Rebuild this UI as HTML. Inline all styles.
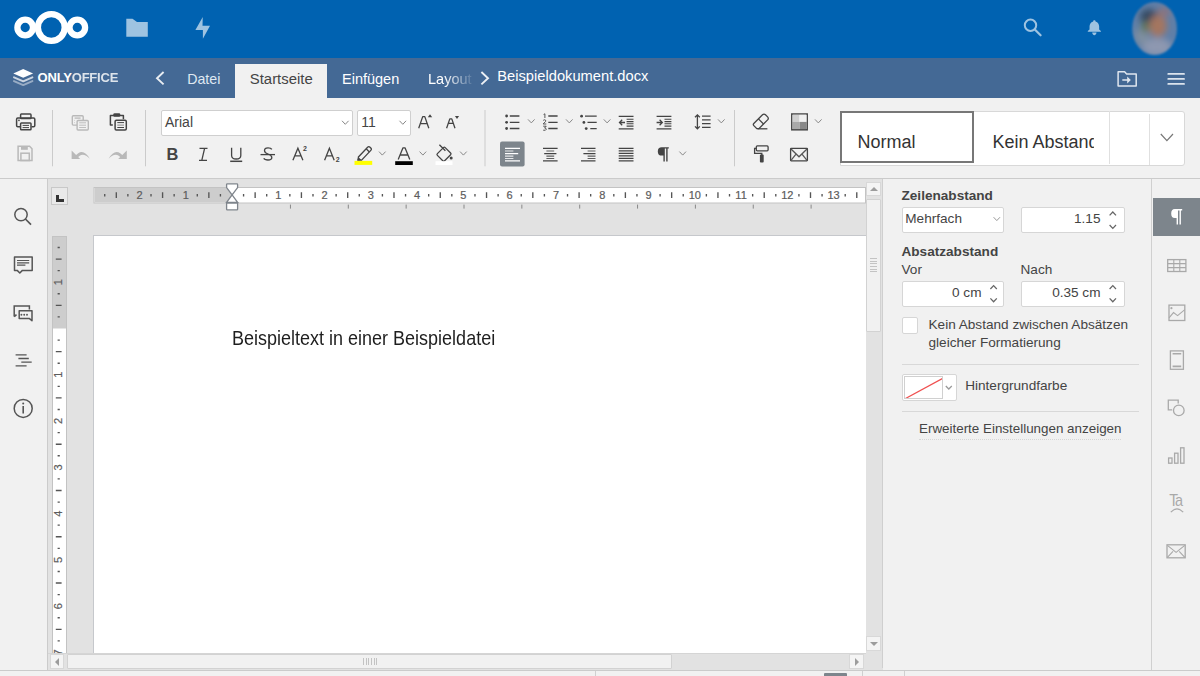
<!DOCTYPE html>
<html><head><meta charset="utf-8">
<style>
*{box-sizing:border-box;margin:0;padding:0}
html,body{width:1200px;height:676px;overflow:hidden;background:#f1f1f1;font-family:"Liberation Sans",sans-serif;}
.a{position:absolute}
#top{left:0;top:0;width:1200px;height:58px;background:#0062b1}
#hdr{left:0;top:58px;width:1200px;height:40px;background:#446995}
#tb{left:0;top:98px;width:1200px;height:81px;background:#f1f1f1;border-bottom:1px solid #cbcbcb}
#ls{left:0;top:179px;width:48px;height:491px;background:#f1f1f1;border-right:1px solid #cbcbcb}
#work{left:48px;top:179px;width:835px;height:491px;background:#e2e2e2}
#page{left:93px;top:235px;width:773px;height:418px;background:#fff;border-left:1px solid #c6c8cc;border-top:1px solid #c6c8cc}
#rp{left:883px;top:179px;width:269px;height:491px;background:#f1f1f1}
#ri{left:1151px;top:179px;width:49px;height:491px;background:#f1f1f1;border-left:1px solid #d0d0d0}
.tab{top:12px;font-size:14.5px;line-height:18px;white-space:nowrap}
.combo{height:25.5px;background:#fff;border:1px solid #cfcfcf;border-radius:2px}
.combo span{position:absolute;top:3px;font-size:14px;color:#444;line-height:16px}
.gal{top:34px;font-size:18px;color:#333;line-height:20px;white-space:nowrap}
.sbb{width:14.5px;height:14.5px;background:#f4f4f4;border:1px solid #d8d8d8}
.sbb svg{position:absolute;left:-0.5px;top:-0.5px}
.lbl{font-size:13.6px;color:#444;line-height:16px;white-space:nowrap}
.fld{height:26.5px;background:#fff;border:1px solid #d6d6d6;border-radius:2px}
.fld span{position:absolute;top:3.5px;font-size:13.6px;color:#444;line-height:16px;white-space:nowrap}
#sb{left:0;top:670px;width:1200px;height:6px;background:#f1f1f1;border-top:1px solid #cbcbcb}
</style></head><body>
<div id="top" class="a">
<svg class="a" style="left:0;top:0" width="240" height="58" viewBox="0 0 240 58">
<g fill="none" stroke="#fff">
<circle cx="25.2" cy="27.5" r="7.8" stroke-width="6.3"/>
<circle cx="77.3" cy="27.5" r="7.8" stroke-width="6.3"/>
<circle cx="51.3" cy="27.5" r="13.4" stroke-width="6.3"/>
</g>
<path d="M126.3,18.7 L132.5,18.7 L137,22 L147.8,22 L147.8,36.8 L126.3,36.8 Z" fill="#9ec3e1"/>
<path d="M202.75,17 L195.4,29.9 L202.9,29.9 L202.9,38.7 L210,25.75 L202.5,25.75 Z" fill="#9ec3e1"/>
</svg>
<svg class="a" style="left:1000px;top:0" width="200" height="58" viewBox="1000 0 200 58">
<circle cx="1030.5" cy="25.2" r="5.7" fill="none" stroke="#9ec3e1" stroke-width="2"/>
<path d="M1034.8,29.5 L1040.6,35.3" stroke="#9ec3e1" stroke-width="2.2" stroke-linecap="round"/>
<path d="M1094.35,20.3 c0.8,0 1.2,0.5 1.2,1.1 c2.5,0.6 3.6,2.8 3.6,5.2 l0,3 l1.75,1.3 l0,0.9 l-13.1,0 l0,-0.9 l1.75,-1.3 l0,-3 c0,-2.4 1.1,-4.6 3.6,-5.2 c0,-0.6 0.4,-1.1 1.2,-1.1 z M1092.2,32.6 l4.3,0 c0,1.4 -1,2.6 -2.15,2.6 c-1.15,0 -2.15,-1.2 -2.15,-2.6 z" fill="#9ec3e1"/>
<defs><filter id="bl" x="-50%" y="-50%" width="200%" height="200%"><feGaussianBlur stdDeviation="3.2"/></filter>
<filter id="bl2" x="-50%" y="-50%" width="200%" height="200%"><feGaussianBlur stdDeviation="1.2"/></filter>
<clipPath id="avc"><ellipse cx="1154.6" cy="28.5" rx="22.4" ry="26.5"/></clipPath></defs>
<g filter="url(#bl2)"><g clip-path="url(#avc)">
<rect x="1130" y="0" width="50" height="58" fill="#5f7fa8"/>
<g filter="url(#bl)">
<ellipse cx="1157" cy="47" rx="15" ry="9" fill="#8e98b0"/>
<ellipse cx="1142" cy="36" rx="7" ry="9" fill="#7f8fa0"/>
<ellipse cx="1149" cy="17" rx="9" ry="8" fill="#344a60"/>
<ellipse cx="1158" cy="26" rx="9" ry="11" fill="#a47660"/>
<ellipse cx="1145" cy="27" rx="4" ry="6" fill="#5e7458"/>
<ellipse cx="1164" cy="12" rx="7" ry="5" fill="#8a7480"/>
</g></g></g>
</svg>
</div>
<div id="hdr" class="a">
<svg class="a" style="left:0;top:0" width="40" height="40" viewBox="0 58 40 40">
<path d="M13.3,73.4 L23.2,69 L33.1,73.4 L23.2,77.7 Z" fill="#fff"/>
<path d="M14,77.3 L23.2,81.3 L32.4,77.3" fill="none" stroke="#fff" stroke-width="2" stroke-linejoin="round" stroke-linecap="round" opacity="0.72"/>
<path d="M14,81.1 L23.2,85.1 L32.4,81.1" fill="none" stroke="#fff" stroke-width="2" stroke-linejoin="round" stroke-linecap="round" opacity="0.45"/>
</svg>
<div class="a" style="left:37.6px;top:12.2px;font-size:13px;font-weight:bold;color:#fff;letter-spacing:-0.2px;line-height:15px">ONLY<span style="opacity:.82">OFFICE</span></div>
<svg class="a" style="left:150px;top:10px" width="20" height="20" viewBox="150 68 20 20"><path d="M163.6,72 L157,78.2 L163.6,84.4" fill="none" stroke="#fff" stroke-width="1.9" opacity="0.88"/></svg>
<div class="a tab" style="left:187.2px;color:#dfe8f2;font-size:14.2px">Datei</div>
<div class="a" style="left:235px;top:6px;width:92px;height:34px;background:#f1f1f1"></div>
<div class="a tab" style="left:249.8px;color:#444;font-size:14.9px">Startseite</div>
<div class="a tab" style="left:342px;color:#fff">Einfügen</div>
<div class="a tab" style="left:428px;color:#fff;width:44px;overflow:hidden;-webkit-mask-image:linear-gradient(90deg,#000 35%,rgba(0,0,0,.55) 70%,rgba(0,0,0,.12) 100%)">Layout</div>
<svg class="a" style="left:476px;top:10px" width="20" height="20" viewBox="476 68 20 20"><path d="M481.4,72 L488,78.2 L481.4,84.4" fill="none" stroke="#fff" stroke-width="1.9" opacity="0.9"/></svg>
<div class="a" style="left:497.3px;top:9px;font-size:14.7px;color:#fff;line-height:18px;white-space:nowrap">Beispieldokument.docx</div>
<svg class="a" style="left:1110px;top:0" width="90" height="40" viewBox="1110 58 90 40">
<path d="M1118.1,71.7 L1124.6,71.7 L1126.6,73.9 L1136.2,73.9 L1136.2,86.1 L1118.1,86.1 Z" fill="none" stroke="#dfe6ef" stroke-width="1.5" stroke-linejoin="round"/>
<path d="M1122.3,80 L1128.6,80" stroke="#dfe6ef" stroke-width="1.5"/><path d="M1127.2,76.6 L1130.8,80 L1127.2,83.4 Z" fill="#dfe6ef"/>
<path d="M1168.3,73.9 L1184,73.9 M1168.3,78.9 L1184,78.9 M1168.3,83.9 L1184,83.9" stroke="#dbe3ed" stroke-width="1.9" stroke-linecap="round"/>
</svg>
</div>
<div id="tb" class="a">
<div class="a combo" style="left:161px;top:12px;width:192px"><span style="left:3px">Arial</span></div>
<div class="a combo" style="left:356.5px;top:12px;width:54px"><span style="left:3.8px">11</span></div>
<div class="a" style="left:840px;top:12.5px;width:345px;height:55.5px;background:#fff;border:1px solid #d8d8d8;border-radius:0 3px 3px 0"></div>
<div class="a" style="left:1109px;top:12.5px;width:1px;height:53px;background:#e0e0e0"></div>
<div class="a" style="left:1149px;top:16px;width:1px;height:51px;background:#e0e0e0"></div>
<div class="a" style="left:840px;top:12.5px;width:134px;height:52.5px;border:2px solid #777"></div>
<div class="a gal" style="left:857.5px">Normal</div>
<div class="a gal" style="left:974px;width:120px;overflow:hidden;padding-left:18.5px">Kein Abstand</div>
<svg class="a" style="left:0;top:0" width="1200" height="81" viewBox="0 98 1200 81"><path d="M52.5,110 L52.5,166.3" stroke="#cbcbcb" stroke-width="1"/>
<path d="M145.5,110 L145.5,166.3" stroke="#cbcbcb" stroke-width="1"/>
<path d="M485,110 L485,166.3" stroke="#cbcbcb" stroke-width="1"/>
<path d="M734.5,110 L734.5,166.3" stroke="#cbcbcb" stroke-width="1"/>
<g fill="none" stroke="#444" stroke-width="1.5">
<rect x="20.6" y="114.1" width="10.4" height="4.5" rx="0.8"/>
<path d="M20,126.8 L17.8,126.8 Q16.6,126.8 16.6,125.6 L16.6,119.2 Q16.6,117.9 17.8,117.9 L33.6,117.9 Q34.8,117.9 34.8,119.2 L34.8,125.6 Q34.8,126.8 33.6,126.8 L31.6,126.8"/>
<rect x="20.6" y="122.9" width="10.4" height="6.9" rx="0.8" fill="#f1f1f1"/>
<path d="M22.6,125.4 L29,125.4 M22.6,127.6 L29,127.6" stroke-width="1"/>
</g><rect x="18.2" y="119.6" width="1.5" height="1.5" fill="#444"/>
<g fill="none" stroke="#b9b9b9" stroke-width="1.5">
<path d="M18.1,146.3 L29.6,146.3 L32,148.7 L32,160.5 L18.1,160.5 Z"/>
<rect x="20.9" y="153.2" width="8.4" height="7.3"/>
</g><rect x="21" y="146" width="6.8" height="3.8" fill="#b9b9b9"/>
<g stroke="#b9b9b9" stroke-width="1.4" fill="#f1f1f1">
<rect x="72.3" y="115.7" width="10.9" height="9.4" rx="1"/>
<path d="M74.6,118.1 L80.6,118.1" stroke-width="1.3"/>
<path d="M74.3,120.4 L74.9,120.4 M74.3,122.6 L74.9,122.6" stroke-width="0.9"/>
<rect x="77.1" y="120.5" width="11.2" height="9.5" rx="1"/>
<path d="M79.2,122.8 L86,122.8 M79.2,125.2 L86,125.2 M79.2,127.5 L86,127.5" stroke-width="0.9"/>
</g>
<g stroke="#444" stroke-width="1.5" fill="none">
<path d="M112.8,125 L110.4,125 L110.4,115.5 L123.4,115.5 L123.4,119.3" stroke-linejoin="round"/>
<rect x="113.3" y="113.3" width="7" height="3.4" rx="1.3" fill="#444" stroke="none"/>
<rect x="115.1" y="120.3" width="11.2" height="9.6" rx="1.2" fill="#f1f1f1"/>
<path d="M117.3,122.6 L124,122.6 M117.3,127.5 L124,127.5" stroke-width="1"/>
<path d="M117.3,125.1 L124,125.1" stroke-width="1" stroke="#888"/>
</g>
<path d="M71.6,150.4 L71.6,159 L80.2,159 Z" fill="#b9b9b9"/>
<path d="M74.6,156.8 Q82.6,146.4 89.8,158.8 Q82.4,150.8 76.8,158.6 Z" fill="#b9b9b9"/>
<path d="M126.8,150.4 L126.8,159 L118.2,159 Z" fill="#b9b9b9"/>
<path d="M123.8,156.8 Q115.8,146.4 108.6,158.8 Q116,150.8 121.6,158.6 Z" fill="#b9b9b9"/>
<g fill="none" stroke="#444" stroke-width="1.3">
<path d="M418.7,128.2 L422.7,116.6 L424.8,116.6 L428.8,128.2 M420.3,123.6 L427.2,123.6" stroke-linejoin="round"/>
<path d="M446.6,128.2 L449.8,118.9 L451.8,118.9 L455,128.2 M447.9,123.3 L453.7,123.3" stroke-linejoin="round"/>
</g>
<path d="M427.8,117.2 L432.2,117.2 L430,114.2 Z" fill="#444"/>
<path d="M454.9,116 L459.1,116 L457,118.9 Z" fill="#444"/>
<text x="166.6" y="159.8" font-family="Liberation Sans" font-weight="bold" font-size="16.4" fill="#444">B</text>
<g fill="none" stroke="#444" stroke-width="1.3">
<path d="M199.5,148.3 L207.5,148.3 M199,160.3 L207,160.3 M204.6,148.3 L201.8,160.3"/>
<path d="M231.6,147.8 L231.6,155.5 Q231.6,159 236.2,159 Q240.8,159 240.8,155.5 L240.8,147.8"/>
<path d="M230.2,161.3 L242.2,161.3" stroke-width="1.5"/>
<path d="M260.5,154.6 L275,154.6"/>
<path d="M271.8,149.4 Q271,147.8 268,147.8 Q264.5,147.8 264.5,150.6 Q264.5,153 268,154 Q271.8,155.2 271.8,157.5 Q271.8,160 268,160 Q264.6,160 263.8,158.3"/>
</g>
<g fill="none" stroke="#444" stroke-width="1.3">
<path d="M292.9,160.2 L297.9,148.2 L302.9,160.2 M294.7,155.8 L301.1,155.8"/>
<path d="M324.6,160.2 L329.4,148.2 L334.2,160.2 M326.4,155.8 L332.4,155.8"/>
</g>
<text x="303.1" y="150.8" font-family="Liberation Sans" font-weight="bold" font-size="7" fill="#444">2</text>
<text x="335.8" y="161.6" font-family="Liberation Sans" font-weight="bold" font-size="7" fill="#444">2</text>
<g fill="none" stroke="#444" stroke-width="1.3">
<path d="M358.4,157 L367.6,147.2 Q368.8,146 370,147.2 L370.8,148 Q372,149.2 370.8,150.4 L361.6,160.2 L358.2,160.2 Z"/>
<path d="M366.2,148.8 L369.4,152"/>
<path d="M398.2,159.6 L403,147.8 L405,147.8 L409.8,159.6 M400.2,155 L407.8,155" stroke-linejoin="round"/>
<path d="M439.4,144.8 L445.4,150.8 M437.4,153.6 L443.4,147.6 Q444.3,146.7 445.2,147.6 L450.6,153 Q451.5,153.9 450.6,154.8 L444.6,160.8 Q443.7,161.7 442.8,160.8 L437.4,155.4 Q436.5,154.5 437.4,153.6 Z"/>
</g>
<path d="M357,160.6 L358.4,157 L361.6,160.2 Z" fill="#444"/>
<circle cx="451.2" cy="158" r="1.5" fill="#444"/>
<rect x="354.5" y="160.9" width="17.7" height="4" fill="#ffff00"/>
<rect x="395.2" y="161.2" width="17.6" height="3.8" fill="#000"/>
<rect x="435.5" y="161.2" width="17" height="3.8" fill="#fff"/>
<path d="M379,151.6 L382.3,155.1 L385.6,151.6" fill="none" stroke="#888" stroke-width="1"/><path d="M419.6,151.6 L422.90000000000003,155.1 L426.20000000000005,151.6" fill="none" stroke="#888" stroke-width="1"/><path d="M460.1,151.6 L463.40000000000003,155.1 L466.70000000000005,151.6" fill="none" stroke="#888" stroke-width="1"/>
<path d="M342,120.8 L345.3,124.3 L348.6,120.8" fill="none" stroke="#888" stroke-width="1"/><path d="M399.5,120.8 L402.8,124.3 L406.1,120.8" fill="none" stroke="#888" stroke-width="1"/>
<g fill="#444">
<circle cx="506.6" cy="116" r="1.4"/><circle cx="506.6" cy="122.3" r="1.4"/><circle cx="506.6" cy="128.5" r="1.4"/>
<circle cx="581.6" cy="116.2" r="1.4"/><circle cx="583.9" cy="122.4" r="1.4"/><circle cx="586.2" cy="128.6" r="1.4"/>
</g>
<g stroke="#444" stroke-width="1.3">
<path d="M509.8,116 L519.4,116 M509.8,122.3 L519.4,122.3 M509.8,128.5 L519.4,128.5"/>
<path d="M548.3,116 L557.6,116 M548.3,122.3 L557.6,122.3 M548.3,128.5 L557.6,128.5"/>
<path d="M585,116.2 L596.7,116.2 M587.5,122.4 L596.7,122.4 M590.3,128.6 L596.7,128.6"/>
</g>
<g fill="none" stroke="#444" stroke-width="0.9">
<path d="M543.6,114.5 L544.9,113.8 L544.9,118"/>
<path d="M543.2,120.5 Q543.8,119.7 544.8,119.8 Q546.2,120 545.6,121.4 L543.2,124 L546.3,124"/>
<path d="M543.2,126.2 L546.2,126.2 L544.6,128 Q546.4,128.2 546.3,129.3 Q546,130.7 543.2,130.2"/>
</g>
<path d="M528,119.4 L531.3,122.9 L534.6,119.4" fill="none" stroke="#888" stroke-width="1"/><path d="M566,119.4 L569.3,122.9 L572.6,119.4" fill="none" stroke="#888" stroke-width="1"/><path d="M603.8,119.4 L607.0999999999999,122.9 L610.4,119.4" fill="none" stroke="#888" stroke-width="1"/>
<g stroke="#444">
<path d="M618.7,116.3 L633.5,116.3 M618.7,128.8 L633.5,128.8" stroke-width="1.3"/>
<path d="M626.6,119.3 L633.5,119.3 M626.6,121.6 L633.5,121.6 M626.6,123.8 L633.5,123.8 M626.6,126.1 L633.5,126.1" stroke-width="1.1"/>
<path d="M656.6,116.3 L671.4,116.3 M656.6,128.8 L671.4,128.8" stroke-width="1.3"/>
<path d="M664.5,119.3 L671.4,119.3 M664.5,121.6 L671.4,121.6 M664.5,123.8 L671.4,123.8 M664.5,126.1 L671.4,126.1" stroke-width="1.1"/>
</g>
<g fill="none" stroke="#444" stroke-width="1.3">
<path d="M619.5,122.5 L625,122.5 M622.2,119.8 L619.5,122.5 L622.2,125.2"/>
<path d="M656.6,122.5 L662.3,122.5 M659.6,119.8 L662.3,122.5 L659.6,125.2"/>
<path d="M697.4,115 L697.4,128.6 M695,117.2 L697.4,114.8 L699.8,117.2 M695,126.4 L697.4,128.8 L699.8,126.4"/>
</g>
<path d="M702,116.2 L710.6,116.2 M702,119.9 L710.6,119.9 M702,123.6 L710.6,123.6 M702,127.3 L710.6,127.3" stroke="#444" stroke-width="1.3"/>
<path d="M718,119.4 L721.3,122.9 L724.6,119.4" fill="none" stroke="#888" stroke-width="1"/>
<rect x="500" y="141.6" width="24.6" height="24.8" rx="2" fill="#7d858c"/>
<g stroke="#fff" stroke-width="1.2">
<path d="M505,148.3 L520,148.3 M505,153.7 L518.2,153.7 M505,160.9 L520,160.9"/>
<path d="M505,151 L513.4,151 M505,156.2 L513.4,156.2 M505,158.5 L513.4,158.5" opacity="0.8"/>
</g>
<g stroke="#444" stroke-width="1.2">
<path d="M543,148.3 L557.6,148.3 M544.2,153.7 L556.4,153.7 M543,160.9 L557.6,160.9"/>
<path d="M546.4,151 L554.2,151 M546.4,156.2 L554.2,156.2 M546.4,158.5 L554.2,158.5" opacity="0.85"/>
<path d="M581,148.3 L595.5,148.3 M583.4,153.7 L595.5,153.7 M581,160.9 L595.5,160.9"/>
<path d="M587.6,151 L595.5,151 M587.6,156.2 L595.5,156.2 M587.6,158.5 L595.5,158.5" opacity="0.85"/>
<path d="M618.7,148.4 L633.5,148.4 M618.7,150.9 L633.5,150.9 M618.7,153.4 L633.5,153.4 M618.7,155.9 L633.5,155.9 M618.7,158.4 L633.5,158.4 M618.7,160.9 L633.5,160.9"/>
</g>
<path d="M661.8,147.2 L668.8,147.2 L668.8,148.6 L667.6,148.6 L667.6,161.4 L666.2,161.4 L666.2,148.6 L664.8,148.6 L664.8,161.4 L663.4,161.4 L663.4,155.6 L661.8,155.6 Q657.8,155.6 657.8,151.4 Q657.8,147.2 661.8,147.2 Z" fill="#444"/>
<path d="M679.4,151.6 L682.6999999999999,155.1 L686.0,151.6" fill="none" stroke="#888" stroke-width="1"/>
<g fill="none" stroke="#444" stroke-width="1.3">
<path d="M753.8,123.5 L762.5,114.8 Q764,113.4 765.5,114.8 L767.6,116.9 Q769,118.4 767.6,119.9 L758.9,128.6 L756.8,128.6 L753.8,125.6 Q752.8,124.6 753.8,123.5 Z"/>
<path d="M758.4,118.9 L763.6,124.1"/>
<path d="M757.5,128.8 L767.4,128.8"/>
</g>
<rect x="791.8" y="114" width="15.4" height="15.8" fill="#fff" stroke="#444" stroke-width="1.5"/>
<rect x="792.5" y="114.7" width="7" height="7.2" fill="#d0d0d0"/>
<rect x="799.5" y="114.7" width="7" height="7.2" fill="#f0f0f0"/>
<rect x="792.5" y="121.9" width="7" height="7.2" fill="#aaa"/>
<rect x="799.5" y="121.9" width="7" height="7.2" fill="#888"/>
<g fill="none" stroke="#444" stroke-width="1.3">
<rect x="756.3" y="145.9" width="11.8" height="4.9" rx="1"/>
<path d="M756.3,148.4 L754.6,148.4 L754.6,153.4 L761.8,153.4 L761.8,155"/>
<rect x="790.6" y="148.4" width="16.8" height="12.4" rx="0.5"/>
<path d="M791,149 L799,156.8 L807,149 M791,160.4 L795.8,154.4 M807,160.4 L802.2,154.4" stroke="#555"/>
</g>
<rect x="759.9" y="154.6" width="3.8" height="7.8" rx="0.9" fill="#444"/>
<path d="M815,119.4 L818.3,122.9 L821.6,119.4" fill="none" stroke="#888" stroke-width="1"/></svg>
<svg class="a" style="left:1150px;top:30px" width="35" height="20" viewBox="1150 128 35 20"><path d="M1160.8,134 L1166.9,140.6 L1173,134" fill="none" stroke="#777" stroke-width="1.2"/></svg>
</div>
<div id="ls" class="a"><svg class="a" style="left:0;top:0" width="47" height="491" viewBox="0 179 47 491">
<g fill="none" stroke="#555" stroke-width="1.5">
<circle cx="21" cy="214.6" r="6.2"/>
<path d="M25.4,219 L31,224.6" stroke-width="1.7"/>
<path d="M14.5,257 L32.2,257 L32.2,270.4 L22.4,270.4 L19.8,273 L17.2,270.4 L14.5,270.4 Z" stroke-linejoin="round"/>
<path d="M17,260.5 L29.2,260.5 M17,262.8 L29.2,262.8 M17,265.2 L25.4,265.2" stroke-width="1.2"/>
<path d="M14.2,316.6 L14.2,306 L29.4,306 L29.4,309.6"/>
<path d="M19.2,310.8 L32,310.8 L32,320.8 L29.5,318.6 L19.2,318.6 Z" stroke-linejoin="round"/>
<path d="M14.2,316.6 L16.5,314.6" />
<path d="M15.6,354.8 L26.6,354.8 M18.4,358.5 L28.8,358.5 M21.3,362.2 L31.7,362.2 M15.6,365.8 L26.6,365.8" stroke-width="1.3"/>
<circle cx="23.2" cy="408.4" r="9"/>
<path d="M23.2,406 L23.2,413.6" stroke-width="1.6"/>
</g>
<g fill="#555"><circle cx="21.4" cy="314.8" r="0.95"/><circle cx="24.2" cy="314.8" r="0.95"/><circle cx="27" cy="314.8" r="0.95"/><circle cx="23.2" cy="403.4" r="1"/></g>
</svg></div>
<div id="work" class="a">
<div class="a" style="left:2.5px;top:8.2px;width:17.5px;height:17.8px;border:1px solid #c8c8c8;background:#e9e9e9"></div>
<div class="a" style="left:8.4px;top:15.5px;width:2.8px;height:7.6px;background:#333"></div>
<div class="a" style="left:8.4px;top:20.4px;width:7.2px;height:2.7px;background:#333"></div>
</div>
<div id="page" class="a"><div class="a" style="left:138px;top:91px;font-size:18px;line-height:22px;color:#1e1e1e;white-space:nowrap;transform:scaleY(1.08);transform-origin:0 0">Beispieltext in einer Beispieldatei</div></div>
<svg class="a" style="left:0;top:0" width="1200" height="676" viewBox="0 0 1200 676"><rect x="94" y="187.5" width="771.5" height="15.5" fill="#fff" stroke="#c3c3c3" stroke-width="1"/>
<rect x="94.5" y="188" width="137.5" height="14.5" fill="#cdcdcd"/>
<path d="M104.73,194 L104.73,196.4 M116.30,192.2 L116.30,198 M127.87,194 L127.87,196.4 M151.01,194 L151.01,196.4 M162.58,192.2 L162.58,198 M174.15,194 L174.15,196.4 M197.29,194 L197.29,196.4 M208.86,192.2 L208.86,198 M220.43,194 L220.43,196.4 M243.57,194 L243.57,196.4 M255.14,192.2 L255.14,198 M266.71,194 L266.71,196.4 M289.85,194 L289.85,196.4 M301.42,192.2 L301.42,198 M312.99,194 L312.99,196.4 M336.13,194 L336.13,196.4 M347.70,192.2 L347.70,198 M359.27,194 L359.27,196.4 M382.41,194 L382.41,196.4 M393.98,192.2 L393.98,198 M405.55,194 L405.55,196.4 M428.69,194 L428.69,196.4 M440.26,192.2 L440.26,198 M451.83,194 L451.83,196.4 M474.97,194 L474.97,196.4 M486.54,192.2 L486.54,198 M498.11,194 L498.11,196.4 M521.25,194 L521.25,196.4 M532.82,192.2 L532.82,198 M544.39,194 L544.39,196.4 M567.53,194 L567.53,196.4 M579.10,192.2 L579.10,198 M590.67,194 L590.67,196.4 M613.81,194 L613.81,196.4 M625.38,192.2 L625.38,198 M636.95,194 L636.95,196.4 M660.09,194 L660.09,196.4 M671.66,192.2 L671.66,198 M683.23,194 L683.23,196.4 M706.37,194 L706.37,196.4 M717.94,192.2 L717.94,198 M729.51,194 L729.51,196.4 M752.65,194 L752.65,196.4 M764.22,192.2 L764.22,198 M775.79,194 L775.79,196.4 M798.93,194 L798.93,196.4 M810.50,192.2 L810.50,198 M822.07,194 L822.07,196.4 M845.21,194 L845.21,196.4 M856.78,192.2 L856.78,198" stroke="#555" stroke-width="1.35"/>
<g font-family="Liberation Sans" font-size="11" fill="#5c5c5c" stroke="#5c5c5c" stroke-width="0.2"><text x="139.44" y="199" text-anchor="middle">2</text><text x="185.72" y="199" text-anchor="middle">1</text><text x="278.28" y="199" text-anchor="middle">1</text><text x="324.56" y="199" text-anchor="middle">2</text><text x="370.84" y="199" text-anchor="middle">3</text><text x="417.12" y="199" text-anchor="middle">4</text><text x="463.40" y="199" text-anchor="middle">5</text><text x="509.68" y="199" text-anchor="middle">6</text><text x="555.96" y="199" text-anchor="middle">7</text><text x="602.24" y="199" text-anchor="middle">8</text><text x="648.52" y="199" text-anchor="middle">9</text><text x="694.80" y="199" text-anchor="middle">10</text><text x="741.08" y="199" text-anchor="middle">11</text><text x="787.36" y="199" text-anchor="middle">12</text><text x="833.64" y="199" text-anchor="middle">13</text></g>
<path d="M290.45,204.6 L290.45,208.6 M348.30,204.6 L348.30,208.6 M406.15,204.6 L406.15,208.6 M464.00,204.6 L464.00,208.6 M521.85,204.6 L521.85,208.6 M579.70,204.6 L579.70,208.6 M637.55,204.6 L637.55,208.6 M695.40,204.6 L695.40,208.6 M753.25,204.6 L753.25,208.6 M811.10,204.6 L811.10,208.6" stroke="#888" stroke-width="1"/>
<path d="M227.3,183.8 L236.9,183.8 Q237.6,183.8 237.6,184.5 L237.6,187.6 L232.1,194.9 L226.6,187.6 L226.6,184.5 Q226.6,183.8 227.3,183.8 Z M232.1,194.9 L237.6,202.4 L226.6,202.4 Z" fill="#fff" stroke="#7f858c" stroke-width="1.3"/><path d="M226.6,203 L237.6,203 L237.6,209.2 Q237.6,209.9 236.9,209.9 L227.3,209.9 Q226.6,209.9 226.6,209.2 Z" fill="#fff" stroke="#7f858c" stroke-width="1.3"/>
<rect x="52.5" y="236.5" width="14" height="420" fill="#fff" stroke="#c3c3c3" stroke-width="1"/>
<rect x="53" y="237" width="13" height="91.5" fill="#cdcdcd"/>
<path d="M57.6,247.51 L59.8,247.51 M55.8,259.08 L61.6,259.08 M57.6,270.65 L59.8,270.65 M57.6,293.79 L59.8,293.79 M55.8,305.36 L61.6,305.36 M57.6,316.93 L59.8,316.93 M57.6,340.07 L59.8,340.07 M55.8,351.64 L61.6,351.64 M57.6,363.21 L59.8,363.21 M57.6,386.35 L59.8,386.35 M55.8,397.92 L61.6,397.92 M57.6,409.49 L59.8,409.49 M57.6,432.63 L59.8,432.63 M55.8,444.20 L61.6,444.20 M57.6,455.77 L59.8,455.77 M57.6,478.91 L59.8,478.91 M55.8,490.48 L61.6,490.48 M57.6,502.05 L59.8,502.05 M57.6,525.19 L59.8,525.19 M55.8,536.76 L61.6,536.76 M57.6,548.33 L59.8,548.33 M57.6,571.47 L59.8,571.47 M55.8,583.04 L61.6,583.04 M57.6,594.61 L59.8,594.61 M57.6,617.75 L59.8,617.75 M55.8,629.32 L61.6,629.32 M57.6,640.89 L59.8,640.89" stroke="#555" stroke-width="1.35"/>
<g font-family="Liberation Sans" font-size="11" fill="#5c5c5c" stroke="#5c5c5c" stroke-width="0.2"><text x="0" y="0" transform="translate(62.2,282.22) rotate(-90)" text-anchor="middle">1</text><text x="0" y="0" transform="translate(62.2,374.78) rotate(-90)" text-anchor="middle">1</text><text x="0" y="0" transform="translate(62.2,421.06) rotate(-90)" text-anchor="middle">2</text><text x="0" y="0" transform="translate(62.2,467.34) rotate(-90)" text-anchor="middle">3</text><text x="0" y="0" transform="translate(62.2,513.62) rotate(-90)" text-anchor="middle">4</text><text x="0" y="0" transform="translate(62.2,559.90) rotate(-90)" text-anchor="middle">5</text><text x="0" y="0" transform="translate(62.2,606.18) rotate(-90)" text-anchor="middle">6</text><text x="0" y="0" transform="translate(62.2,652.46) rotate(-90)" text-anchor="middle">7</text></g></svg>
<div id="vsb" class="a" style="left:865.5px;top:179px;width:17.5px;height:489px;background:#e2e2e2;border-right:1px solid #cfcfcf">
<div class="a sbb" style="left:0.5px;top:2.5px"><svg width="14" height="14" viewBox="0 0 14 14"><path d="M3,9 L11,9 L7,5 Z" fill="#9c9c9c"/></svg></div>
<div class="a" style="left:0.5px;top:19.5px;width:14.5px;height:133px;background:#f1f1f1;border:1px solid #d2d2d2;border-radius:1px"></div>
<div class="a" style="left:4.5px;top:78.5px;width:6.5px;height:16px;background:repeating-linear-gradient(#c3c3c3 0 1px,transparent 1px 2.7px)"></div>
<div class="a sbb" style="left:0.5px;top:457px"><svg width="14" height="14" viewBox="0 0 14 14"><path d="M3,5 L11,5 L7,9 Z" fill="#9c9c9c"/></svg></div>
</div>
<div id="hsb" class="a" style="left:48px;top:652.5px;width:817.5px;height:18px;background:#e2e2e2;border-top:1px solid #d5d5d5">
<div class="a sbb" style="left:1.5px;top:0.5px"><svg width="14" height="14" viewBox="0 0 14 14"><path d="M9,3 L9,11 L5,7 Z" fill="#9c9c9c"/></svg></div>
<div class="a" style="left:18.5px;top:0.5px;width:605.5px;height:14.5px;background:#f1f1f1;border:1px solid #d2d2d2;border-radius:1px"></div>
<div class="a" style="left:314.5px;top:4.5px;width:16px;height:6.5px;background:repeating-linear-gradient(90deg,#c3c3c3 0 1px,transparent 1px 2.7px)"></div>
<div class="a sbb" style="left:801px;top:0.5px"><svg width="14" height="14" viewBox="0 0 14 14"><path d="M5,3 L5,11 L9,7 Z" fill="#9c9c9c"/></svg></div>
</div>
<div id="rp" class="a">
<div class="a lbl" style="left:18.5px;top:9px;font-weight:bold">Zeilenabstand</div>
<div class="a fld" style="left:18.5px;top:27.5px;width:102.5px"><span style="left:2.8px">Mehrfach</span></div>
<div class="a fld" style="left:137.5px;top:27.5px;width:104px"><span style="right:23px">1.15</span></div>
<div class="a lbl" style="left:18.5px;top:64.5px;font-weight:bold">Absatzabstand</div>
<div class="a lbl" style="left:18.5px;top:82.5px">Vor</div>
<div class="a lbl" style="left:137.5px;top:82.5px">Nach</div>
<div class="a fld" style="left:18.5px;top:101.5px;width:102.5px"><span style="right:21.5px">0 cm</span></div>
<div class="a fld" style="left:137.5px;top:101.5px;width:104px"><span style="right:23px">0.35 cm</span></div>
<div class="a" style="left:19px;top:137.5px;width:15.5px;height:17px;background:#fff;border:1px solid #d6d6d6;border-radius:2px"></div>
<div class="a lbl" style="left:45.5px;top:137px;line-height:18.2px">Kein Abstand zwischen Absätzen<br>gleicher Formatierung</div>
<div class="a" style="left:18.5px;top:184.5px;width:237.5px;height:1px;background:#d8d8d8"></div>
<div class="a" style="left:18.5px;top:195px;width:55.5px;height:26.5px;background:#fff;border:1px solid #d6d6d6;border-radius:2px"></div>
<div class="a" style="left:20.5px;top:197px;width:39px;height:22.5px;border:1px solid #d0d0d0;overflow:hidden"><svg width="39" height="23" viewBox="0 0 39 23"><path d="M0,21.8 L38,1.2" stroke="#f05050" stroke-width="1.2"/></svg></div>
<div class="a lbl" style="left:82.2px;top:198.5px">Hintergrundfarbe</div>
<div class="a" style="left:18.5px;top:231.5px;width:237.5px;height:1px;background:#d8d8d8"></div>
<div class="a lbl" style="left:36px;top:241.5px;font-size:13.4px;border-bottom:1px dotted #d6d6d6;padding-bottom:2px">Erweiterte Einstellungen anzeigen</div>
<svg class="a" style="left:0;top:0" width="269" height="491" viewBox="883 179 269 491">
<g fill="none" stroke="#666" stroke-width="1.25">
<path d="M993.6,217.2 L996.8,220.6 L1000,217.2" stroke="#999" stroke-width="1"/>
<path d="M1109.6,215.4 L1112.8,212 L1116,215.4 M1109.6,225 L1112.8,228.4 L1116,225"/>
<path d="M990.4,289 L993.6,285.6 L996.8,289 M990.4,298.4 L993.6,301.8 L996.8,298.4"/>
<path d="M1109.6,289 L1112.8,285.6 L1116,289 M1109.6,298.4 L1112.8,301.8 L1116,298.4"/>
<path d="M945.8,386 L948.8,389 L951.8,386" stroke="#999"/>
</g>
</svg>
</div>
<div id="ri" class="a">
<div class="a" style="left:1px;top:18.8px;width:48px;height:38.2px;background:#7d858c"></div>
<svg class="a" style="left:0;top:0" width="49" height="491" viewBox="1151 179 49 491">
<path d="M1173.8,209 L1181.2,209 L1181.2,210.4 L1179.9,210.4 L1179.9,224.4 L1178.5,224.4 L1178.5,210.4 L1177,210.4 L1177,224.4 L1175.6,224.4 L1175.6,218 L1173.8,218 Q1170.2,218 1170.2,213.5 Q1170.2,209 1173.8,209 Z" fill="#fff"/>
<g fill="none" stroke="#a9a9a9" stroke-width="1.3">
<rect x="1166.7" y="259.6" width="18.2" height="11.9"/>
<path d="M1166.7,263.6 L1184.9,263.6 M1166.7,267.6 L1184.9,267.6 M1172.8,259.6 L1172.8,271.5 M1178.8,259.6 L1178.8,271.5" stroke-width="1.1"/>
<rect x="1168" y="305.1" width="15.8" height="15.4"/>
<path d="M1168,317.8 L1172.5,312.6 L1176.6,315.6 L1183.8,309.6" stroke-width="1.1"/>
<rect x="1169.4" y="350.9" width="13" height="18.4"/>
<path d="M1171.6,353.8 L1180.2,353.8 M1171.6,366.4 L1180.2,366.4" stroke-width="1.6"/>
<path d="M1171.2,409.8 L1167.3,409.8 L1167.3,400.2 L1177.2,400.2 L1177.2,403.4"/>
<circle cx="1177.8" cy="410.4" r="5.3"/>
<rect x="1167.6" y="458" width="3.4" height="5.2"/>
<rect x="1173.6" y="453.2" width="3.4" height="10"/>
<rect x="1179.6" y="447.8" width="3.4" height="15.4"/>
<path d="M1169.8,512.2 Q1176,505.4 1182.2,512.2" stroke-width="1.2"/>
<rect x="1166" y="544.8" width="18.2" height="13" />
<path d="M1166.4,545.4 L1175.1,552.4 L1183.8,545.4 M1166.4,557.4 L1172,551.4 M1183.8,557.4 L1178.2,551.4" stroke-width="1.1"/>
</g>
<circle cx="1170.4" cy="308.2" r="1.1" fill="#a9a9a9"/>
<text x="1168.2" y="506.2" font-family="Liberation Sans" font-size="16" fill="#a9a9a9" letter-spacing="-1.6" transform="translate(1168.2,0) scale(0.9,1) translate(-1168.2,0)">Ta</text>
</svg>
</div>
<div id="sb" class="a">
<div class="a" style="left:595px;top:0;width:1px;height:6px;background:#d0d0d0"></div>
<div class="a" style="left:823.5px;top:2px;width:23.5px;height:4px;background:#7d858c;border-radius:1px 1px 0 0"></div>
<div class="a" style="left:862px;top:0;width:1px;height:6px;background:#d0d0d0"></div>
<div class="a" style="left:904px;top:0;width:1px;height:6px;background:#d0d0d0"></div>
</div>
</body></html>
